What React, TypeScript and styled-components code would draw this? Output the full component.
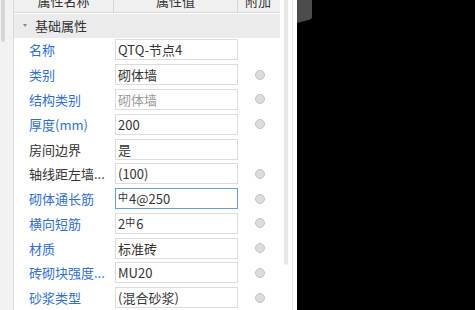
import React from 'react';
import styled, { createGlobalStyle } from 'styled-components';

const GlobalStyle = createGlobalStyle`
  html, body {
    margin: 0;
    padding: 0;
    background: #ffffff;
  }
  body {
    font-family: "Noto Sans CJK SC", "Noto Sans", sans-serif;
    font-size: 13px;
    color: #333333;
  }
`;

const Screen = styled.div`
  display: flex;
  width: 475px;
  height: 310px;
  overflow: hidden;
`;

const LeftStrip = styled.div`
  width: 14px;
  flex-shrink: 0;
  background: #f2f2f2;
  border-right: 1px solid #dadada;
  padding-left: 1px;
  box-sizing: border-box;
`;

const LeftThumb = styled.div`
  width: 4px;
  height: 42px;
  background: #d6d6d6;
  border-radius: 0 0 2px 2px;
`;

const Panel = styled.div`
  width: 266px;
  flex-shrink: 0;
  display: flex;
  flex-direction: column;
  margin-top: -11px;
`;

const HeaderRow = styled.div`
  display: grid;
  grid-template-columns: 100px 124px 41px;
  height: 24px;
  background: #f0f0f0;
  border-bottom: 1px solid #d8d8d8;
  box-sizing: border-box;
`;

const HeaderCell = styled.div<{ $last?: boolean }>`
  display: flex;
  align-items: center;
  justify-content: center;
  color: #333333;
  border-right: 1px solid ${(p) => (p.$last ? 'transparent' : '#d6d6d6')};
`;

const GroupRow = styled.div`
  display: flex;
  align-items: center;
  height: 24px;
  margin-top: 1px;
  background: #ebebeb;
  padding-left: 9px;
  gap: 8px;
`;

const Caret = styled.span`
  width: 0;
  height: 0;
  border-left: 2.5px solid transparent;
  border-right: 2.5px solid transparent;
  border-top: 3px solid #8a8a8a;
`;

const PropRow = styled.div`
  display: grid;
  grid-template-columns: 101px 124px 41px;
  align-items: center;
  height: 25px;
`;

const Label = styled.div<{ $blue?: boolean }>`
  padding-left: 15px;
  white-space: nowrap;
  overflow: hidden;
  color: ${(p) => (p.$blue ? '#2f6ed6' : '#333333')};
`;

const ValueBox = styled.div<{ $focus?: boolean; $disabled?: boolean }>`
  height: 21px;
  width: 123px;
  box-sizing: border-box;
  border: 1px solid ${(p) => (p.$focus ? '#6b9be2' : '#dcdcdc')};
  padding-left: 2px;
  display: flex;
  align-items: center;
  white-space: nowrap;
  color: ${(p) => (p.$disabled ? '#9a9a9a' : '#333333')};
`;

const Rebar = styled.span`
  font-size: 10px;
  position: relative;
  top: -2px;
  margin-right: 1px;
`;

const ExtraCell = styled.div`
  display: flex;
  justify-content: center;
`;

const Radio = styled.span`
  width: 10px;
  height: 10px;
  box-sizing: border-box;
  border-radius: 50%;
  background: #dcdcdc;
  border: 1px solid #c2c2c2;
`;

const ScrollTrack = styled.div`
  width: 13px;
  flex-shrink: 0;
  padding-left: 4px;
  box-sizing: border-box;
  border-right: 1px solid #e4e4e4;
`;

const ScrollThumb = styled.div`
  width: 4px;
  height: 265px;
  background: #e8e8e8;
  border-radius: 0 0 2px 2px;
`;

const Gap = styled.div`
  width: 4px;
  flex-shrink: 0;
  background: #ffffff;
`;

const DarkArea = styled.div`
  flex: 1;
  background: #000000;
`;

type Prop = {
  label: string;
  blue?: boolean;
  value: React.ReactNode;
  extra?: boolean;
  focus?: boolean;
  disabled?: boolean;
};

const rows: Prop[] = [
  { label: '名称', blue: true, value: 'QTQ-节点4' },
  { label: '类别', blue: true, value: '砌体墙', extra: true },
  { label: '结构类别', blue: true, value: '砌体墙', extra: true, disabled: true },
  { label: '厚度(mm)', blue: true, value: '200', extra: true },
  { label: '房间边界', value: '是' },
  { label: '轴线距左墙...', value: '(100)', extra: true },
  {
    label: '砌体通长筋',
    blue: true,
    value: (
      <>
        <Rebar>中</Rebar>4@250
      </>
    ),
    extra: true,
    focus: true,
  },
  {
    label: '横向短筋',
    blue: true,
    value: (
      <>
        2<Rebar>中</Rebar>6
      </>
    ),
    extra: true,
  },
  { label: '材质', blue: true, value: '标准砖', extra: true },
  { label: '砖砌块强度...', blue: true, value: 'MU20', extra: true },
  { label: '砂浆类型', blue: true, value: '(混合砂浆)', extra: true },
];

const App = () => {
  return (
    <>
      <GlobalStyle />
      <Screen>
        <LeftStrip>
          <LeftThumb />
        </LeftStrip>
        <Panel>
          <HeaderRow>
            <HeaderCell>属性名称</HeaderCell>
            <HeaderCell>属性值</HeaderCell>
            <HeaderCell $last>附加</HeaderCell>
          </HeaderRow>
          <GroupRow>
            <Caret />
            基础属性
          </GroupRow>
          {rows.map((r) => (
            <PropRow key={r.label}>
              <Label $blue={r.blue}>{r.label}</Label>
              <ValueBox $focus={r.focus} $disabled={r.disabled}>
                {r.value}
              </ValueBox>
              <ExtraCell>{r.extra && <Radio />}</ExtraCell>
            </PropRow>
          ))}
        </Panel>
        <ScrollTrack>
          <ScrollThumb />
        </ScrollTrack>
        <Gap />
        <DarkArea>
          <svg width="16" height="24" viewBox="0 0 16 24">
            <path d="M0 0 H15 V17 Q15 19 13 19.5 L0 23 Z" fill="#4c4c4c" />
          </svg>
        </DarkArea>
      </Screen>
    </>
  );
};

export default App;
